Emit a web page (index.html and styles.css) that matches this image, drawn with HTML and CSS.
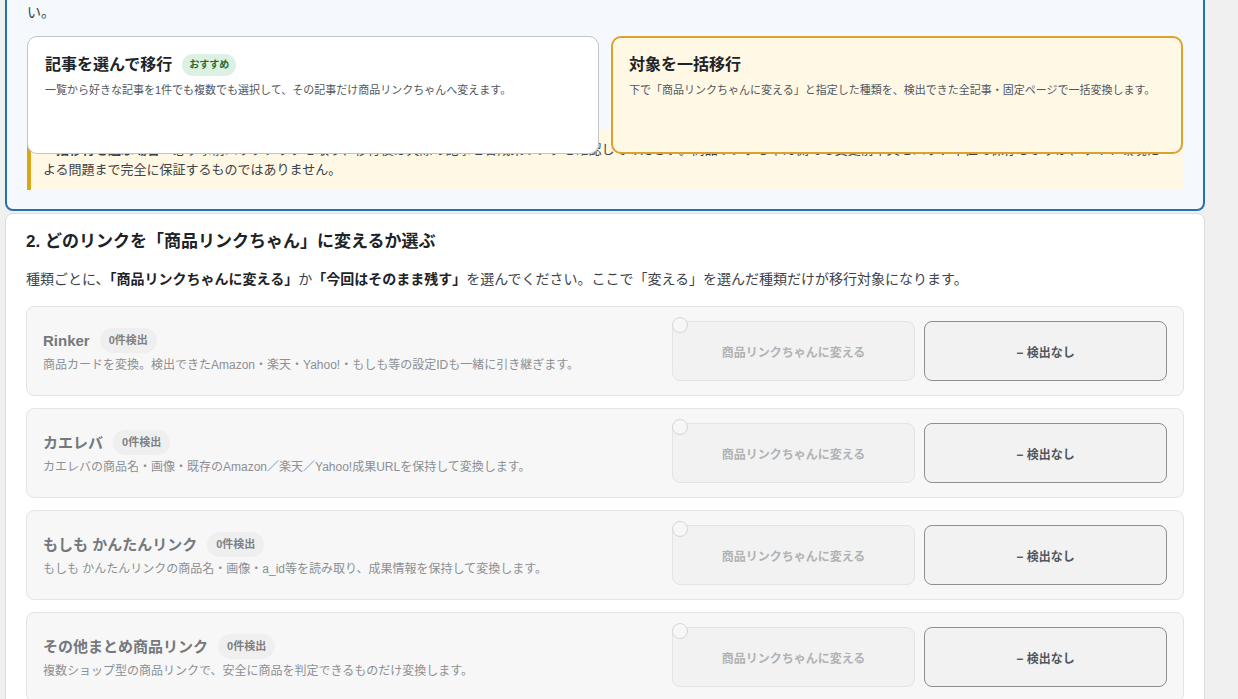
FILE: index.html
```html
<!DOCTYPE html>
<html lang="ja">
<head>
  <meta charset="UTF-8" />
  <title>商品リンクちゃん 移行</title>
  <link rel="stylesheet" href="styles.css">
</head>
<body>

<div class="page">

  <!-- 1. 移行方法 -->
  <section class="box box-mode">
    <p class="lead">一括移行は検出されたリンクをまとめて変換します。記事ごとに確認したい場合は「記事を選んで移行」を、サイト全体を一気に変換したい場合は「対象を一括移行」を選んでください。</p>

    <div class="mode-grid">
      <div class="mode-card">
        <div class="mode-title">記事を選んで移行 <span class="badge-green">おすすめ</span></div>
        <div class="mode-desc">一覧から好きな記事を1件でも複数でも選択して、その記事だけ商品リンクちゃんへ変えます。</div>
      </div>
      <div class="mode-card active">
        <div class="mode-title">対象を一括移行</div>
        <div class="mode-desc">下で「商品リンクちゃんに変える」と指定した種類を、検出できた全記事・固定ページで一括変換します。</div>
      </div>
    </div>

    <div class="notice">
      <strong>一括移行を選ぶ場合：</strong>必ず事前バックアップを取り、移行後は実際の記事と各成果リンクを確認してください。商品リンクちゃん側でも変更前本文をバッチ単位で保存しますが、サイト環境に<br>よる問題まで完全に保証するものではありません。
    </div>
  </section>

  <!-- 2. 種類ごとの選択 -->
  <section class="box box-types">
    <h2>2. どのリンクを「商品リンクちゃん」に変えるか選ぶ</h2>
    <p class="types-lead">種類ごとに、<strong>「商品リンクちゃんに変える」</strong>か<strong>「今回はそのまま残す」</strong>を選んでください。ここで「変える」を選んだ種類だけが移行対象になります。</p>

    <div class="type-list">
      <div class="type-row">
        <div class="type-info">
          <div class="type-name">Rinker <span class="badge-gray">0件検出</span></div>
          <div class="type-desc">商品カードを変換。検出できたAmazon・楽天・Yahoo!・もしも等の設定IDも一緒に引き継ぎます。</div>
        </div>
        <div class="type-actions">
          <label class="choice disabled"><span class="radio"></span>商品リンクちゃんに変える</label>
          <div class="choice none">− 検出なし</div>
        </div>
      </div>

      <div class="type-row">
        <div class="type-info">
          <div class="type-name">カエレバ <span class="badge-gray">0件検出</span></div>
          <div class="type-desc">カエレバの商品名・画像・既存のAmazon／楽天／Yahoo!成果URLを保持して変換します。</div>
        </div>
        <div class="type-actions">
          <label class="choice disabled"><span class="radio"></span>商品リンクちゃんに変える</label>
          <div class="choice none">− 検出なし</div>
        </div>
      </div>

      <div class="type-row">
        <div class="type-info">
          <div class="type-name">もしも かんたんリンク <span class="badge-gray">0件検出</span></div>
          <div class="type-desc">もしも かんたんリンクの商品名・画像・a_id等を読み取り、成果情報を保持して変換します。</div>
        </div>
        <div class="type-actions">
          <label class="choice disabled"><span class="radio"></span>商品リンクちゃんに変える</label>
          <div class="choice none">− 検出なし</div>
        </div>
      </div>

      <div class="type-row">
        <div class="type-info">
          <div class="type-name">その他まとめ商品リンク <span class="badge-gray">0件検出</span></div>
          <div class="type-desc">複数ショップ型の商品リンクで、安全に商品を判定できるものだけ変換します。</div>
        </div>
        <div class="type-actions">
          <label class="choice disabled"><span class="radio"></span>商品リンクちゃんに変える</label>
          <div class="choice none">− 検出なし</div>
        </div>
      </div>
    </div>
  </section>

</div>

</body>
</html>
```

FILE: styles.css
```css
html, body { margin: 0; background: #f0f0f1; }
body {
  font-family: "Liberation Sans", "Noto Sans CJK JP", sans-serif;
  color: #3c434a;
  overflow: hidden;
}
.page { width: 1200px; margin-left: 5px; }

.box { border-radius: 8px; box-sizing: border-box; }

/* 1. 移行方法 */
.box-mode {
  margin-top: -39px;
  background: #f5f8fd;
  border: 2px solid #2271b1;
  padding: 16px 20px 19px;
}
.lead { margin: 0; font-size: 14px; line-height: 22px; color: #3c434a; }

.mode-grid {
  display: grid;
  grid-template-columns: 1fr 1fr;
  gap: 12px;
  margin-top: 13px;
}
.mode-card {
  position: relative;
  height: 118px;
  box-sizing: border-box;
  background: #fff;
  border: 1px solid #c3c4c7;
  border-radius: 10px;
  padding: 17px 17px;
}
.mode-card.active {
  background: #fff8e5;
  border: 2px solid #dba32e;
  padding: 16px 16px;
}
.mode-title {
  display: flex;
  align-items: center;
  gap: 10px;
  font-size: 16px;
  line-height: 22px;
  font-weight: bold;
  color: #1d2327;
}
.badge-green {
  display: inline-block;
  background: #dcf1e3;
  color: #1b6a35;
  font-size: 10px;
  line-height: 22px;
  padding: 0 7px;
  border-radius: 11px;
  font-weight: bold;
}
.mode-desc { margin-top: 6px; font-size: 11px; line-height: 16px; color: #50575e; }

.notice {
  margin-top: -24px;
  background: #fff8e5;
  border-left: 4px solid #dba617;
  padding: 10px 12px;
  font-size: 13px;
  line-height: 20px;
  color: #3c434a;
}

/* 2. 種類ごとの選択 */
.box-types {
  margin-top: 2px;
  background: #fff;
  border: 1px solid #dcdcde;
  padding: 16px 20px 20px;
}
.box-types h2 {
  margin: 0;
  font-size: 17px;
  line-height: 24px;
  color: #1d2327;
}
.types-lead {
  margin: 14px 0 0;
  font-size: 14px;
  line-height: 22px;
  color: #3c434a;
}
.types-lead strong { color: #1d2327; }

.type-list { display: flex; flex-direction: column; gap: 12px; margin-top: 16px; }
.type-row {
  display: flex;
  align-items: center;
  justify-content: space-between;
  height: 90px;
  box-sizing: border-box;
  padding: 0 16px;
  background: #f7f7f7;
  border: 1px solid #e4e4e4;
  border-radius: 8px;
}
.type-name {
  display: flex;
  align-items: center;
  gap: 10px;
  font-size: 15px;
  line-height: 25px;
  font-weight: bold;
  color: #75787c;
}
.badge-gray {
  display: inline-block;
  background: #efefef;
  color: #7c7f83;
  font-size: 11px;
  line-height: 25px;
  padding: 0 9px;
  border-radius: 13px;
}
.type-desc { margin-top: 3px; font-size: 12px; line-height: 18px; color: #8c8f94; }

.type-actions { display: flex; gap: 9px; }
.choice {
  position: relative;
  width: 243px;
  height: 60px;
  box-sizing: border-box;
  display: flex;
  align-items: center;
  justify-content: center;
  background: #f2f2f2;
  border-radius: 8px;
  font-size: 12px;
  font-weight: bold;
}
.choice.disabled { border: 1px solid #e4e4e4; color: #b0b2b5; }
.choice.none { border: 1px solid #8c8f94; color: #50575e; }
.radio {
  position: absolute;
  left: -1px;
  top: -5px;
  width: 16px;
  height: 16px;
  box-sizing: border-box;
  border: 1px solid #d6d6d6;
  border-radius: 50%;
  background: #f7f7f7;
}
```
